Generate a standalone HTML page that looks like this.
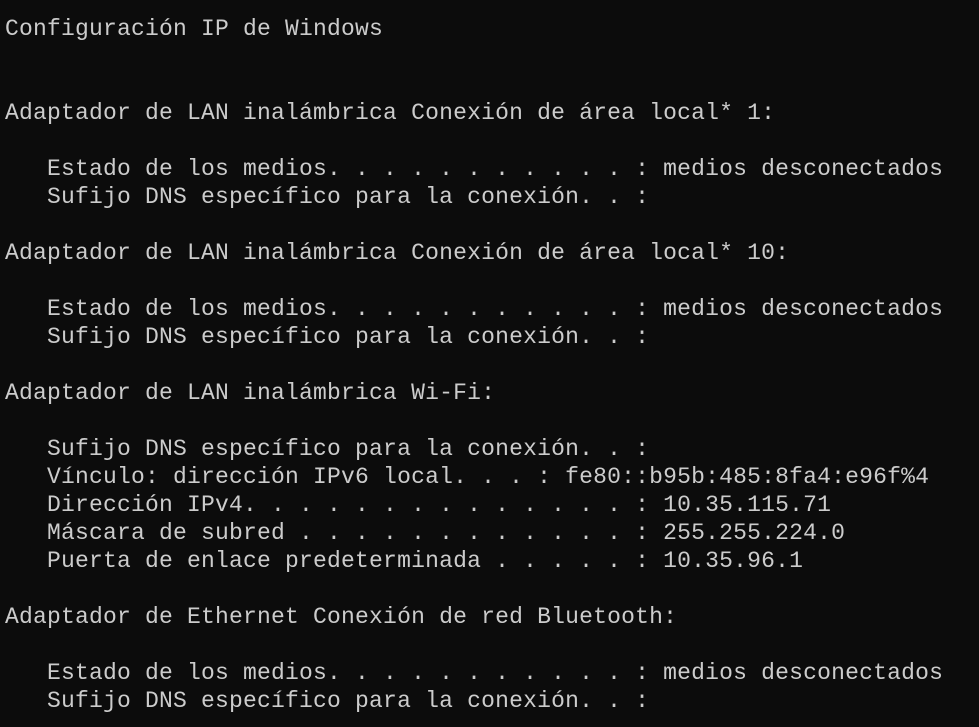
<!DOCTYPE html>
<html><head><meta charset="utf-8"><style>
html,body{margin:0;padding:0;background:#0c0c0c;width:979px;height:727px;overflow:hidden}
pre{margin:0;padding:15px 0 0 5px;font-family:"Liberation Mono",monospace;font-size:23px;letter-spacing:0.2px;line-height:28px;color:#cccccc}
</style></head><body><pre>Configuración IP de Windows


Adaptador de LAN inalámbrica Conexión de área local* 1:

   Estado de los medios. . . . . . . . . . . : medios desconectados
   Sufijo DNS específico para la conexión. . :

Adaptador de LAN inalámbrica Conexión de área local* 10:

   Estado de los medios. . . . . . . . . . . : medios desconectados
   Sufijo DNS específico para la conexión. . :

Adaptador de LAN inalámbrica Wi-Fi:

   Sufijo DNS específico para la conexión. . :
   Vínculo: dirección IPv6 local. . . : fe80::b95b:485:8fa4:e96f%4
   Dirección IPv4. . . . . . . . . . . . . . : 10.35.115.71
   Máscara de subred . . . . . . . . . . . . : 255.255.224.0
   Puerta de enlace predeterminada . . . . . : 10.35.96.1

Adaptador de Ethernet Conexión de red Bluetooth:

   Estado de los medios. . . . . . . . . . . : medios desconectados
   Sufijo DNS específico para la conexión. . :</pre></body></html>
